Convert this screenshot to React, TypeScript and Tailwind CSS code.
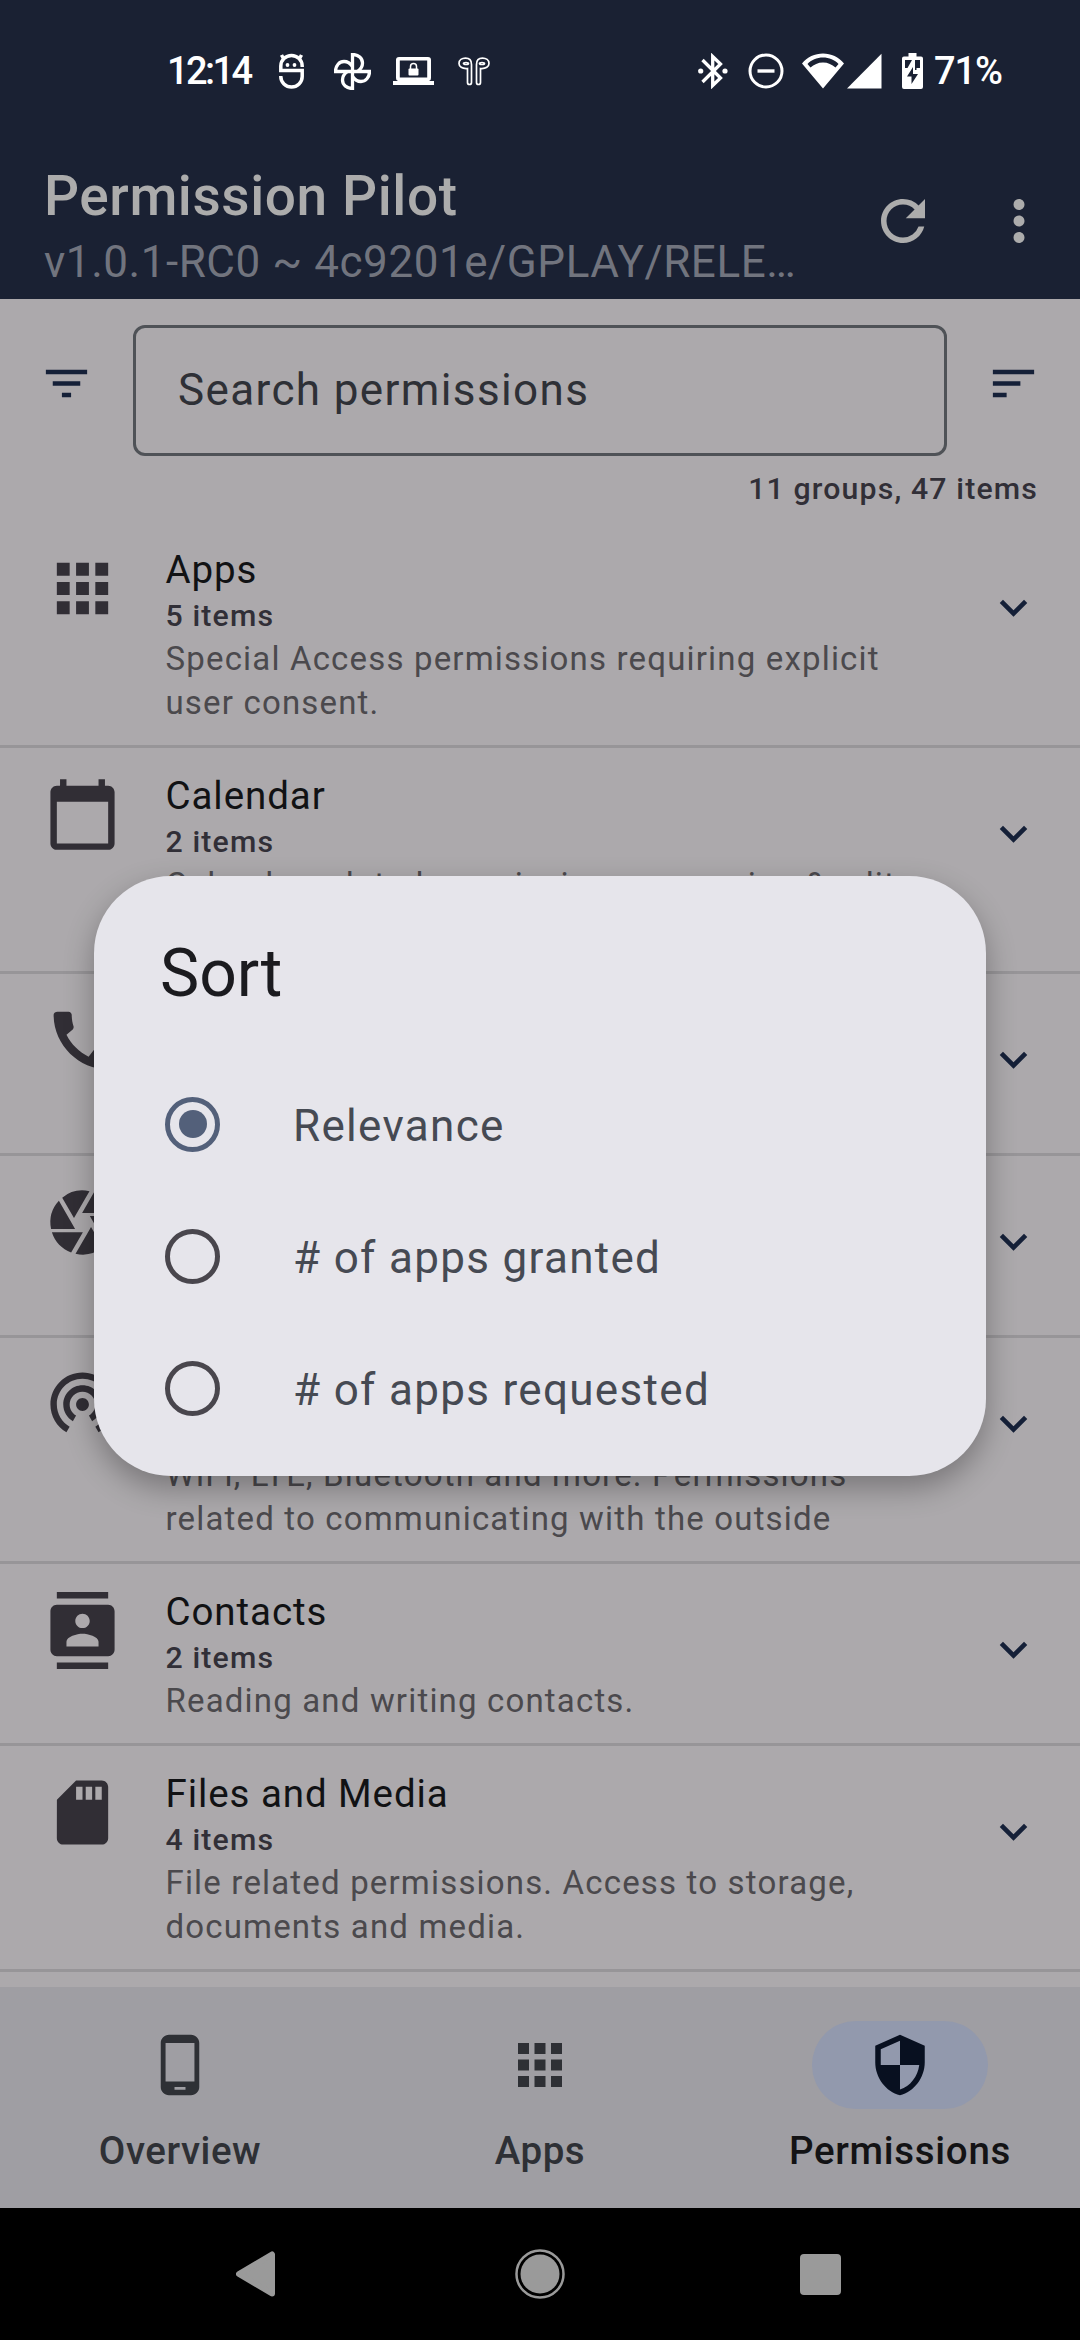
import type { ComponentType, ReactNode } from "react";
import {
  MdApps,
  MdCalendarToday,
  MdCall,
  MdCamera,
  MdContacts,
  MdExpandMore,
  MdFilterList,
  MdMoreVert,
  MdPhoneAndroid,
  MdRefresh,
  MdSdStorage,
  MdSort,
} from "react-icons/md";

type IconProps = { className?: string };

function AccessPointIcon({ className }: IconProps) {
  return (
    <svg viewBox="0 1 24 24" className={className} fill="currentColor">
      <path d="M12 11c-1.1 0-2 .9-2 2s.9 2 2 2 2-.9 2-2-.9-2-2-2zm6 2c0-3.31-2.69-6-6-6s-6 2.69-6 6c0 2.22 1.21 4.15 3 5.19l1-1.74c-1.19-.7-2-1.97-2-3.45 0-2.21 1.79-4 4-4s4 1.79 4 4c0 1.48-.81 2.75-2 3.45l1 1.74c1.79-1.04 3-2.97 3-5.19zM12 3C6.48 3 2 7.48 2 13c0 3.7 2.01 6.92 4.99 8.65l1-1.73C5.61 18.53 4 15.96 4 13c0-4.42 3.58-8 8-8s8 3.58 8 8c0 2.96-1.61 5.53-4 6.92l1 1.73c2.99-1.73 5-4.95 5-8.65 0-5.52-4.48-10-10-10z" />
    </svg>
  );
}

function ShieldIcon({ className }: IconProps) {
  return (
    <svg viewBox="0 0 24 24" className={className} fill="currentColor">
      <path
        fillRule="evenodd"
        d="M12 1 21 5v6c0 5.55-3.84 10.74-9 12-5.16-1.26-9-6.45-9-12V5l9-4zm0 2.18L5 6.3V12h7V3.18zM12 12v8.93c3.72-1.15 6.47-4.82 7-8.93h-7z"
      />
    </svg>
  );
}

function StatusIcons() {
  return (
    <>
      <svg viewBox="0 0 25 36" className="ml-[26px] h-[36px] w-[25px]" fill="none" stroke="white" strokeWidth="3.500">
        <path d="M23.200 14v-1a10.700 10.500 0 0 0-21.400 0v4.500h21.400v6a10.700 10.500 0 0 1-21.400 0V23" />
        <path d="M4.500 5.500 2.500 2M20.500 5.500l2-3.500" />
        <circle cx="8.500" cy="12" r="1.900" fill="white" stroke="none" />
        <circle cx="15.500" cy="12" r="1.900" fill="white" stroke="none" />
      </svg>
      <svg viewBox="-18.500 -18.500 37 37" className="ml-[30px] h-[37px] w-[37px]" fill="none" stroke="white" strokeWidth="3.300">
        <path d="M0 0V-17C6-17 10-13 10-8.500C10-5 8-2 5 0" />
        <path d="M0 0H17C17 6 13 10 8.500 10C5 10 2 8 0 5" />
        <path d="M0 0V17C-6 17-10 13-10 8.500C-10 5-8 2-5 0" />
        <path d="M0 0H-17C-17-6-13-10-8.500-10C-5-10-2-8 0-5" />
      </svg>
      <svg viewBox="0 0 41 28" className="ml-[22px] h-[28px] w-[41px]" fill="white">
        <path fillRule="evenodd" d="M6 0h29a3 3 0 0 1 3 3v18a3 3 0 0 1-2 3h5v4H0v-4h5a3 3 0 0 1-2-3V3a3 3 0 0 1 3-3zm.800 3.500v17h27.400v-17z" />
        <rect x="15.500" y="11.500" width="10" height="7" rx="1" />
        <path d="M17.500 12V9.500a3 3 0 0 1 6 0V12" fill="none" stroke="white" strokeWidth="1.500" />
      </svg>
      <svg viewBox="0 0 32 29" className="ml-[24px] h-[29px] w-[32px]" fill="none" stroke="white" strokeWidth="1.700">
        <path d="M9.500 11.500C4 12 1 9.500 1 6.500C1 3 4 1.200 7.500 1.200C11.500 1.200 13.500 4 13.500 7.500V25.500a2 2 0 0 1-4 0z" />
        <path d="M22.500 11.500C28 12 31 9.500 31 6.500C31 3 28 1.200 24.500 1.200C20.500 1.200 18.500 4 18.500 7.500V25.500a2 2 0 0 0 4 0z" />
        <ellipse cx="8" cy="6.500" rx="2.500" ry="1" />
        <ellipse cx="24" cy="6.500" rx="2.500" ry="1" />
      </svg>
      <svg viewBox="0 0 30 36" className="ml-[208px] h-[36px] w-[30px]" fill="none" stroke="white" strokeWidth="3.300">
        <path d="M4.500 7 22.500 25 14.700 32.500V3.500L22.500 11 4.500 29" />
        <circle cx="2.700" cy="18" r="2.600" fill="white" stroke="none" />
        <circle cx="27" cy="18" r="2.600" fill="white" stroke="none" />
      </svg>
      <svg viewBox="0 0 36 36" className="ml-[20px] h-[36px] w-[36px]" fill="none" stroke="white" strokeWidth="3">
        <circle cx="18" cy="18" r="16" />
        <path d="M9.500 18h17" strokeWidth="3.400" />
      </svg>
      <svg viewBox="0 0 42 36" className="ml-[18px] h-[36px] w-[42px]" fill="white">
        <path fillRule="evenodd" d="M21 35.500 0 10.500C5 4 13 .500 21 .500S37 4 42 10.500zM5.500 11 8.500 14.500C12 11.500 16 9.500 21 9.500S30 11.500 33.500 14.500L36.500 11C33 7 27 4.500 21 4.500S9 7 5.500 11z" />
      </svg>
      <svg viewBox="0 0 35 36" className="ml-[3px] h-[36px] w-[35px]" fill="white">
        <path d="M34.500.800V35.500H0z" />
      </svg>
      <svg viewBox="0 0 21 36" className="ml-[20px] h-[36px] w-[21px]" fill="white">
        <path fillRule="evenodd" d="M6.500 0h8v3.500H19a2 2 0 0 1 2 2V34a2 2 0 0 1-2 2H2a2 2 0 0 1-2-2V5.500a2 2 0 0 1 2-2h4.500zM3 7v8h2.500L10 7zM13 7v10h1.500V15H18V7h-2zM11 14l-6 9.500h4.500V31l6.500-10h-5z" />
      </svg>
    </>
  );
}

type Group = {
  title: string;
  count: string;
  lines: string[];
  Icon: ComponentType<IconProps>;
};

const groups: Group[] = [
  { title: "Apps", count: "5 items", lines: ["Special Access permissions requiring explicit", "user consent."], Icon: MdApps },
  { title: "Calendar", count: "2 items", lines: ["Calendar related permissions accessing & edit", "events."], Icon: MdCalendarToday },
  { title: "Calls", count: "6 items", lines: ["Phone call related permissions."], Icon: MdCall },
  { title: "Camera", count: "1 items", lines: ["Taking pictures and videos."], Icon: MdCamera },
  { title: "Connectivity", count: "12 items", lines: ["WiFi, LTE, Bluetooth and more. Permissions", "related to communicating with the outside"], Icon: AccessPointIcon },
  { title: "Contacts", count: "2 items", lines: ["Reading and writing contacts."], Icon: MdContacts },
  { title: "Files and Media", count: "4 items", lines: ["File related permissions. Access to storage,", "documents and media."], Icon: MdSdStorage },
];

function GroupRow({ title, count, lines, Icon }: Group) {
  return (
    <li className="flex items-start border-b-[3px] border-[#979598] pl-[44px] pr-[39px]">
      <Icon className="mt-[28px] h-[77px] w-[77px] shrink-0 text-[#312e35]" />
      <div className="ml-[44.500px] flex-1 whitespace-nowrap pt-[22px] pb-[20px]">
        <div className="text-[38.5px] leading-[52px] tracking-[0.024em] text-[#111214]">{title}</div>
        <div className="text-[30.25px] font-medium leading-[40px] tracking-[0.038em] text-[#312f37]">{count}</div>
        <div className="pt-px text-[33px] leading-[44px] tracking-[0.0355em] text-[#4b494d]">
          {lines.map((line) => (
            <div key={line}>{line}</div>
          ))}
        </div>
      </div>
      <MdExpandMore className="mt-[58px] h-[55px] w-[55px] shrink-0 text-[#152038]" />
    </li>
  );
}

function Radio({ label, selected = false }: { label: string; selected?: boolean }) {
  return (
    <div className="flex h-[132px] items-center pl-[71px]">
      <div
        className={
          selected
            ? "flex h-[55px] w-[55px] items-center justify-center rounded-full border-[5.5px] border-[#53607a]"
            : "h-[55px] w-[55px] rounded-full border-[5.5px] border-[#49464d]"
        }
      >
        {selected && <div className="h-[28px] w-[28px] rounded-full bg-[#53607a]" />}
      </div>
      <div className="ml-[73px] pt-[4px] text-[44px] leading-[56px] tracking-[0.030em] text-[#464a53]">{label}</div>
    </div>
  );
}

function NavItem({ label, icon, active = false }: { label: string; icon: ReactNode; active?: boolean }) {
  return (
    <div className="flex flex-1 flex-col items-center pt-[34px]">
      <div
        className={
          active
            ? "flex h-[88px] w-[176px] items-center justify-center rounded-full bg-[#9299ad] text-[#081020]"
            : "flex h-[88px] w-[176px] items-center justify-center text-[#2e3035]"
        }
      >
        {icon}
      </div>
      <div
        className={
          active
            ? "mt-[17px] text-[38.5px] font-medium leading-[50px] tracking-[0.018em] text-[#131315]"
            : "mt-[17px] text-[38.5px] font-medium leading-[50px] tracking-[0.014em] text-[#2e3035]"
        }
      >
        {label}
      </div>
    </div>
  );
}

export default function App() {
  return (
    <div className="relative flex h-[2340px] w-[1080px] flex-col overflow-hidden bg-[#aca9ac] font-['Roboto',sans-serif]">
      <header className="h-[299px] shrink-0 bg-[#1a2133]">
        <div className="flex h-[142px] items-center pl-[167px] text-white">
          <div className="w-[86px] whitespace-nowrap text-[38px] font-medium leading-[44px] tracking-[-0.068em]">12:14</div>
          <StatusIcons />
          <div className="ml-[11px] whitespace-nowrap text-[38px] font-medium leading-[44px] tracking-[-0.030em]">71%</div>
        </div>
        <div className="flex h-[157px] items-center pl-[44px]">
          <div className="w-[770px]">
            <div className="mt-[14px] text-[55px] font-medium leading-[66px] tracking-[0.0105em] text-[#acacac]">Permission Pilot</div>
            <div className="mt-[3px] truncate text-[44px] leading-[60px] tracking-[0.0125em] text-[#71747e]">v1.0.1-RC0 ~ 4c9201e/GPLAY/RELE…</div>
          </div>
          <MdRefresh className="ml-[56px] mt-px h-[66px] w-[66px] text-[#acacac]" />
          <MdMoreVert className="ml-[50px] mt-px h-[66px] w-[66px] text-[#acacac]" />
        </div>
      </header>

      <section className="h-[223px] shrink-0">
        <div className="flex pl-[39px] pt-[26px]">
          <MdFilterList className="mt-[31px] h-[55px] w-[55px] text-[#152038]" />
          <div className="ml-[39px] flex h-[131px] w-[814px] items-center rounded-[12px] border-[3px] border-[#4f5257] pb-[2px] pl-[42px] text-[44px] tracking-[0.03125em] text-[#2e3036]">
            Search permissions
          </div>
          <MdSort className="ml-[39px] mt-[31px] h-[55px] w-[55px] text-[#152038]" />
        </div>
        <div className="mt-[13px] pr-[42px] text-right text-[30.25px] font-medium leading-[40px] tracking-[0.038em] text-[#312f37]">
          11 groups, 47 items
        </div>
      </section>

      <ul className="h-[1465px] shrink-0 overflow-hidden">
        {groups.map((group) => (
          <GroupRow key={group.title} {...group} />
        ))}
      </ul>

      <nav className="flex h-[221px] shrink-0 bg-[#9f9ea3]">
        <NavItem label="Overview" icon={<MdPhoneAndroid className="h-[66px] w-[66px]" />} />
        <NavItem label="Apps" icon={<MdApps className="h-[66px] w-[66px]" />} />
        <NavItem label="Permissions" active icon={<ShieldIcon className="h-[66px] w-[66px]" />} />
      </nav>

      <div className="flex h-[132px] shrink-0 items-center bg-black pl-[236px]">
        <svg viewBox="0 0 39 46" className="h-[46px] w-[39px]" fill="#9a9a9a" stroke="#9a9a9a" strokeWidth="6" strokeLinejoin="round">
          <path d="M36 3.500V42.500L3 23z" />
        </svg>
        <svg viewBox="0 0 50 50" className="ml-[240px] h-[50px] w-[50px]">
          <circle cx="25" cy="25" r="23.500" fill="none" stroke="#9a9a9a" strokeWidth="2.500" />
          <circle cx="25" cy="25" r="19.500" fill="#9a9a9a" />
        </svg>
        <div className="ml-[235px] h-[41px] w-[41px] rounded-[4px] bg-[#9a9a9a]" />
      </div>

      <div className="absolute left-[94px] top-[876px] h-[600px] w-[892px] rounded-[77px] bg-[#e6e5eb] shadow-[0_12px_30px_rgba(0,0,0,0.3)]">
        <h2 className="pl-[66px] pt-[58px] text-[66px] leading-[80px] text-[#1b1b1f]">Sort</h2>
        <div className="pt-[44px]">
          <Radio label="Relevance" selected />
          <Radio label="# of apps granted" />
          <Radio label="# of apps requested" />
        </div>
      </div>
    </div>
  );
}
